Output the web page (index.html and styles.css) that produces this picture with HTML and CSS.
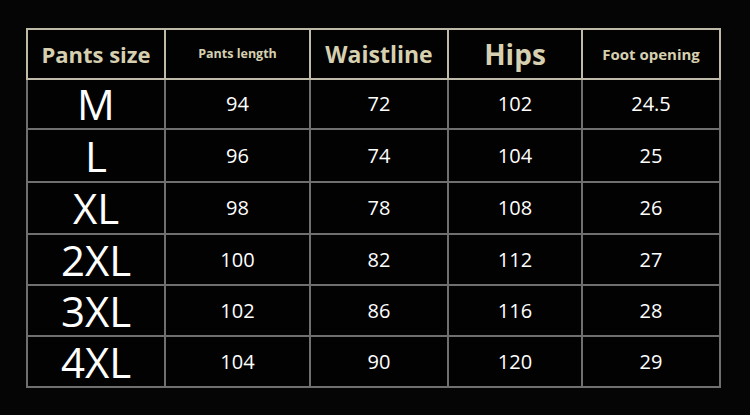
FILE: index.html
```html
<!DOCTYPE html>
<html lang="en">
<head>
<meta charset="utf-8">
<title>Pants size chart</title>
<link rel="stylesheet" href="styles.css">
</head>
<body>
<main class="page">
  <table class="chart">
    <colgroup>
      <col class="c1"><col class="c2"><col class="c3"><col class="c4"><col class="c5">
    </colgroup>
    <thead>
      <tr class="head">
        <th class="h-size">Pants size</th>
        <th class="h-length">Pants length</th>
        <th class="h-waist">Waistline</th>
        <th class="h-hips">Hips</th>
        <th class="h-foot">Foot opening</th>
      </tr>
    </thead>
    <tbody>
      <tr class="r1"><td class="size">M</td><td class="num len">94</td><td class="num">72</td><td class="num">102</td><td class="num">24.5</td></tr>
      <tr class="r2"><td class="size">L</td><td class="num len">96</td><td class="num">74</td><td class="num">104</td><td class="num">25</td></tr>
      <tr class="r3"><td class="size">XL</td><td class="num len">98</td><td class="num">78</td><td class="num">108</td><td class="num">26</td></tr>
      <tr class="r4"><td class="size">2XL</td><td class="num len">100</td><td class="num">82</td><td class="num">112</td><td class="num">27</td></tr>
      <tr class="r5"><td class="size">3XL</td><td class="num len">102</td><td class="num">86</td><td class="num">116</td><td class="num">28</td></tr>
      <tr class="r6"><td class="size">4XL</td><td class="num len">104</td><td class="num">90</td><td class="num">120</td><td class="num">29</td></tr>
    </tbody>
  </table>
</main>
</body>
</html>
```

FILE: styles.css
```css
html, body {
  margin: 0;
  padding: 0;
  background: #050505;
  width: 750px;
  height: 415px;
  overflow: hidden;
}

.page {
  padding: 28px 0 0 26px;
  font-family: "Open Sans", "Noto Sans", "DejaVu Sans", sans-serif;
}

.chart {
  border-collapse: collapse;
  table-layout: fixed;
  width: 693px;
  background: #020202;
}

.c1 { width: 138px; }
.c2 { width: 145px; }
.c3 { width: 138px; }
.c4 { width: 134px; }
.c5 { width: 138px; }

.chart th,
.chart td {
  padding: 0;
  text-align: center;
  vertical-align: middle;
  line-height: 1;
}

.chart th {
  border: 2px solid #c0bba8;
  font-weight: 700;
  color: #d6d0b0;
}

.chart td {
  border: 2px solid #6f6f6f;
  color: #ffffff;
  font-weight: 400;
}

.head { height: 50px; }
.r1 { height: 50px; }
.r2 { height: 53px; }
.r3 { height: 52px; }
.r4 { height: 51px; }
.r5 { height: 51px; }
.r6 { height: 51px; }

.h-size { font-size: 22px; color: #ccc69d; padding-left: 2px; }
.h-length { font-size: 12.5px; color: #ffffff; padding-left: 6px; }
.h-waist { font-size: 23px; color: #e2dcc4; padding-left: 4px; }
.h-hips { font-size: 28px; color: #dad0ad; padding-left: 4px; padding-bottom: 2px; }
.h-foot { font-size: 15px; color: #e0ddd0; padding-left: 4px; }

.size {
  font-size: 42px;
  padding-top: 2px;
}

.num {
  font-size: 20px;
  padding-top: 4px;
  padding-left: 3px;
}

.len { padding-left: 14px; }
```
